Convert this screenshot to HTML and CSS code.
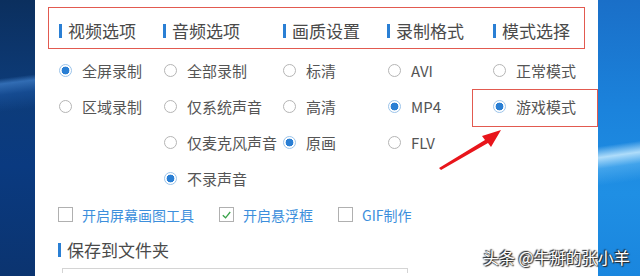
FILE: index.html
```html
<!DOCTYPE html>
<html lang="zh-CN">
<head>
<meta charset="utf-8">
<link rel="stylesheet" href="styles.css">
</head>
<body>
<div class="screen">
  <div class="desk desk-left"></div>
  <div class="panel">
    <div class="heads">
      <div class="head">视频选项</div>
      <div class="head">音频选项</div>
      <div class="head">画质设置</div>
      <div class="head">录制格式</div>
      <div class="head">模式选择</div>
    </div>
    <div class="options">
      <div class="opt"><span class="radio on"></span>全屏录制</div>
      <div class="opt"><span class="radio"></span>全部录制</div>
      <div class="opt"><span class="radio"></span>标清</div>
      <div class="opt"><span class="radio"></span>AVI</div>
      <div class="opt"><span class="radio"></span>正常模式</div>

      <div class="opt"><span class="radio"></span>区域录制</div>
      <div class="opt"><span class="radio"></span>仅系统声音</div>
      <div class="opt"><span class="radio"></span>高清</div>
      <div class="opt"><span class="radio on"></span>MP4</div>
      <div class="opt"><span class="radio on"></span>游戏模式</div>

      <div class="opt"></div>
      <div class="opt"><span class="radio"></span>仅麦克风声音</div>
      <div class="opt"><span class="radio on"></span>原画</div>
      <div class="opt"><span class="radio"></span>FLV</div>
      <div class="opt"></div>

      <div class="opt"></div>
      <div class="opt"><span class="radio on"></span>不录声音</div>
    </div>
    <div class="checks">
      <div class="chk"><span class="box"></span>开启屏幕画图工具</div>
      <div class="chk"><span class="box"><svg viewBox="0 0 14 14" width="14" height="14"><path d="M3 7.2 L6 10 L11 3.8" fill="none" stroke="#3aa34a" stroke-width="1.4"/></svg></span>开启悬浮框</div>
      <div class="chk"><span class="box"></span>GIF制作</div>
    </div>
    <div class="save head">保存到文件夹</div>
    <div class="pathbox"></div>
    <div class="mark-box"></div>
    <svg class="arrow" width="80" height="60" viewBox="0 0 80 60">
      <path d="M6 50 L52 22 L49 18 L68 12 L58 29 L55 25 L8 52 Z" fill="#e8151b"/>
    </svg>
  </div>
  <div class="desk desk-right"></div>
  <div class="watermark">头条 @牛掰的张小羊</div>
</div>
</body>
</html>
```
FILE: styles.css
```css
* { box-sizing: border-box; }
html, body { margin: 0; padding: 0; }
body {
  width: 640px;
  height: 276px;
  overflow: hidden;
  font-family: "Noto Sans CJK SC", "Noto Sans", sans-serif;
  background: #fff;
}
.screen {
  position: relative;
  display: flex;
  width: 640px;
  height: 276px;
  overflow: hidden;
}
.desk { height: 276px; flex: none; }
.desk-left {
  width: 35px;
  background:
    linear-gradient(173deg, transparent 0 28%, rgba(80,150,230,0.55) 30%, rgba(40,110,200,0.3) 34%, transparent 40%),
    linear-gradient(180deg, #0b2f5e 0%, #0d3c7a 35%, #0a3a80 60%, #0b3470 100%);
}
.desk-right {
  width: 42px;
  background:
    linear-gradient(172deg, transparent 0 52%, rgba(200,235,255,0.85) 56%, rgba(120,200,250,0.4) 60%, transparent 66%),
    linear-gradient(180deg, #1a6fc8 0%, #1b83dc 40%, #1f8fe4 70%, #1a86de 100%);
}
.panel {
  position: relative;
  width: 563px;
  height: 276px;
  overflow: hidden;
  flex: none;
  background: #fff;
  padding-top: 7px;
}
.heads {
  display: grid;
  grid-template-columns: 104px 120px 104px 106px 1fr;
  margin: 0 13px 0 13px;
  padding-left: 10px;
  height: 42px;
  border: 1px solid #e25a50;
  align-items: center;
}
.head {
  display: flex;
  align-items: center;
  font-size: 17px;
  color: #4a4a4a;
  line-height: 20px;
  padding-top: 6px;
}
.head::before {
  content: "";
  width: 3px;
  height: 14px;
  background: #2a7fd4;
  margin-right: 6px;
}
.options {
  display: grid;
  grid-template-columns: 105px 119px 105px 105px 1fr;
  grid-auto-rows: 36px;
  margin-top: 3px;
  padding-left: 24px;
}
.opt {
  display: flex;
  align-items: center;
  font-size: 15px;
  color: #555;
  white-space: nowrap;
}
.radio {
  width: 13px;
  height: 13px;
  border-radius: 50%;
  border: 1px solid #b5b5b5;
  margin-right: 10px;
  flex: none;
  background: #fff;
}
.radio.on {
  border-color: #9cc4ea;
  background: radial-gradient(circle, #2a7fd4 0 3.6px, #fff 4.2px);
}
.checks {
  display: flex;
  gap: 25px;
  height: 37px;
  align-items: center;
  padding-left: 23px;
}
.chk {
  display: flex;
  align-items: center;
  font-size: 14px;
  color: #3d8fdc;
}
.box {
  width: 15px;
  height: 15px;
  border: 1px solid #b0b0b0;
  margin-right: 9px;
  display: flex;
  align-items: center;
  justify-content: center;
  background: #fff;
}
.box svg { display: block; }
.save {
  margin-left: 23px;
  margin-top: 1px;
  height: 28px;
  padding-top: 3px;
}
.pathbox {
  margin-left: 27px;
  margin-top: 6px;
  width: 346px;
  height: 5px;
  border: 1px solid #d4d4d4;
  border-bottom: none;
}
.mark-box {
  position: absolute;
  left: 437px;
  top: 89px;
  width: 126px;
  height: 38px;
  border: 1px solid #e25a50;
}
.arrow {
  position: absolute;
  left: 398px;
  top: 118px;
}
.watermark {
  position: absolute;
  left: 483px;
  top: 245px;
  font-size: 16px;
  color: #fff;
  font-family: "Noto Sans CJK SC", sans-serif;
  white-space: nowrap;
  text-shadow: 0 0 2px #333, 1px 1px 1px #222, -1px -1px 1px #222;
}
```
